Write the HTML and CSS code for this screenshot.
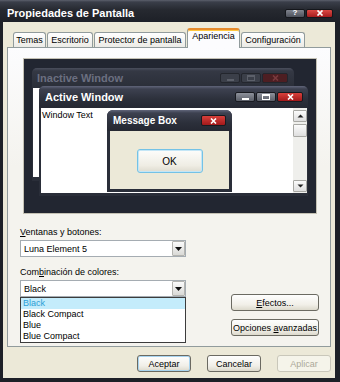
FILE: index.html
```html
<!DOCTYPE html>
<html lang="es">
<head>
  <meta charset="UTF-8" />
  <title>Propiedades de Pantalla</title>
  <link rel="stylesheet" href="styles.css">
</head>
<body>
  <div class="window">
    <div class="titlebar">
      <span class="title">Propiedades de Pantalla</span>
      <div class="caption-btns">
        <span class="cap-btn help">?</span>
        <span class="cap-btn close">
          <svg width="8" height="6" viewBox="0 0 8 6"><path d="M1.5 0.5l5 5M6.5 0.5l-5 5" stroke="#fff" stroke-width="1.7"/></svg>
        </span>
      </div>
    </div>

    <div class="client">
      <div class="tabs">
        <div class="tab t-temas">Temas</div>
        <div class="tab t-escritorio">Escritorio</div>
        <div class="tab t-protector">Protector de pantalla</div>
        <div class="tab t-apariencia active">Apariencia</div>
        <div class="tab t-config">Configuración</div>
      </div>

      <div class="panel">
        <!-- vista previa -->
        <div class="preview">
          <div class="mini inactive">
            <div class="mini-title">
              <span>Inactive Window</span>
              <div class="mini-btns">
                <span class="mbtn"><i class="g-min"></i></span>
                <span class="mbtn"><i class="g-max"></i></span>
                <span class="mbtn x">
                  <svg width="7" height="6" viewBox="0 0 7 6"><path d="M1 0.5l5 5M6 0.5l-5 5" stroke="#7a3a3e" stroke-width="1.6"/></svg>
                </span>
              </div>
            </div>
            <div class="mini-body"></div>
          </div>

          <div class="mini active-win">
            <div class="mini-title">
              <span>Active Window</span>
              <div class="mini-btns">
                <span class="mbtn"><i class="g-min"></i></span>
                <span class="mbtn"><i class="g-max"></i></span>
                <span class="mbtn x">
                  <svg width="7" height="6" viewBox="0 0 7 6"><path d="M1 0.5l5 5M6 0.5l-5 5" stroke="#fff" stroke-width="1.6"/></svg>
                </span>
              </div>
            </div>
            <div class="mini-body">
              <div class="win-text">Window Text</div>
              <div class="scrollbar">
                <span class="sb-btn">
                  <svg width="7" height="4" viewBox="0 0 7 4"><path d="M0.5 3.5h6l-3-3z" fill="#222"/></svg>
                </span>
                <span class="sb-btn thumb"></span>
                <span class="sb-btn down">
                  <svg width="7" height="4" viewBox="0 0 7 4"><path d="M0.5 0.5h6l-3 3z" fill="#222"/></svg>
                </span>
              </div>
            </div>
          </div>

          <div class="mini msgbox">
            <div class="mini-title">
              <span>Message Box</span>
              <div class="mini-btns">
                <span class="mbtn x">
                  <svg width="7" height="6" viewBox="0 0 7 6"><path d="M1 0.5l5 5M6 0.5l-5 5" stroke="#fff" stroke-width="1.6"/></svg>
                </span>
              </div>
            </div>
            <div class="mini-body">
              <span class="ok-btn">OK</span>
            </div>
          </div>
        </div>

        <!-- opciones -->
        <div class="form-area">
          <div class="left-col">
            <label class="lbl"><u>V</u>entanas y botones:</label>
            <div class="combo">
              <span>Luna Element 5</span>
              <span class="combo-arrow">
                <svg width="7" height="4" viewBox="0 0 7 4"><path d="M0 0h7l-3.5 4z" fill="#111"/></svg>
              </span>
            </div>

            <label class="lbl second">Com<u>b</u>inación de colores:</label>
            <div class="combo">
              <span>Black</span>
              <span class="combo-arrow">
                <svg width="7" height="4" viewBox="0 0 7 4"><path d="M0 0h7l-3.5 4z" fill="#111"/></svg>
              </span>
            </div>
            <ul class="list">
              <li class="sel">Black</li>
              <li>Black Compact</li>
              <li>Blue</li>
              <li>Blue Compact</li>
            </ul>
          </div>

          <div class="right-col">
            <button class="btn"><u>E</u>fectos...</button>
            <button class="btn">Opciones <u>a</u>vanzadas</button>
          </div>
        </div>
      </div>

      <div class="dialog-btns">
        <button class="btn small default">Aceptar</button>
        <button class="btn small">Cancelar</button>
        <button class="btn small disabled">Aplicar</button>
      </div>
    </div>
  </div>
</body>
</html>
```

FILE: styles.css
```css
* {
  box-sizing: border-box;
}

body {
  margin: 0;
  width: 340px;
  height: 382px;
  overflow: hidden;
  background: #1d2027;
  font-family: "Liberation Sans", Arial, sans-serif;
  font-size: 9px;
  color: #000;
}

.window {
  display: flex;
  flex-direction: column;
  height: 382px;
}

/* barra de titulo */
.titlebar {
  height: 22px;
  display: flex;
  align-items: center;
  padding: 4px 7px 0 7px;
  background: linear-gradient(#5c606c 0, #3a3e49 2px, #262930 45%, #1d2027 100%);
}

.title {
  color: #fff;
  font-weight: bold;
  font-size: 11px;
}

.caption-btns {
  margin-left: auto;
  display: flex;
  gap: 1px;
}

.cap-btn {
  height: 9px;
  border: 1px solid #15171c;
  border-radius: 2px;
  display: flex;
  align-items: center;
  justify-content: center;
  color: #fff;
  font-weight: bold;
  font-size: 8px;
  line-height: 8px;
}

.cap-btn.help {
  width: 20px;
  background: linear-gradient(#80848e, #4d515b);
}

.cap-btn.close {
  width: 27px;
  background: linear-gradient(#dc4a44, #a51c1e);
}

/* area cliente */
.client {
  flex: 1;
  margin: 0 5px 4px 3px;
  background: #ece9d8;
  display: flex;
  flex-direction: column;
}

.tabs {
  height: 25px;
  display: flex;
  align-items: flex-end;
  padding-left: 10px;
}

.tab {
  height: 15px;
  margin-right: 1px;
  border: 1px solid #919b9c;
  border-bottom: 0;
  border-radius: 3px 3px 0 0;
  background: linear-gradient(#ffffff, #ecebe6);
  text-align: center;
  line-height: 14px;
  white-space: nowrap;
}

.t-temas { width: 33px; }
.t-escritorio { width: 46px; }
.t-protector { width: 92px; }
.t-apariencia { width: 53px; }
.t-config { width: 64px; }

.tab.active {
  height: 20px;
  margin-bottom: -1px;
  position: relative;
  z-index: 1;
  background: #fcfcfe;
  border-top: 2px solid #e68b2c;
  box-shadow: inset 0 1px 0 #ffc73c;
  line-height: 13px;
}

.panel {
  height: 300px;
  margin: 0 4px;
  border: 1px solid #919b9c;
  background: linear-gradient(#fcfcfe, #f4f3ee 40%);
  padding: 10px 0 0 12px;
}

/* vista previa */
.preview {
  position: relative;
  width: 294px;
  height: 156px;
  margin-left: 3px;
  border: 1px solid #c4c1b4;
  background: #222631;
}

.mini {
  position: absolute;
  display: flex;
  flex-direction: column;
  background: #2a2e39;
  border-radius: 5px 5px 0 0;
  overflow: hidden;
}

.mini-title {
  display: flex;
  align-items: center;
  flex: none;
  font-weight: bold;
  font-size: 11px;
  color: #fff;
  background: linear-gradient(#60657a 0, #3d4150 3px, #2c303b 60%, #252832 100%);
}

.mini-btns {
  margin-left: auto;
  display: flex;
  gap: 1px;
  align-self: flex-start;
}

.mbtn {
  width: 20px;
  height: 10px;
  border: 1px solid #181a20;
  border-radius: 2px;
  background: linear-gradient(#8d919b, #5a5e68);
  display: flex;
  align-items: center;
  justify-content: center;
}

.mbtn.x {
  width: 26px;
  background: linear-gradient(#d8403b, #a2191b);
}

.g-min {
  display: block;
  width: 7px;
  height: 2px;
  margin-top: 4px;
  background: #fff;
}

.g-max {
  display: block;
  width: 8px;
  height: 6px;
  border: 1px solid #fff;
  border-top-width: 2px;
}

.inactive {
  left: 8px;
  top: 9px;
  width: 262px;
  height: 113px;
}

.inactive .mini-title {
  height: 20px;
  padding-left: 5px;
  color: #6b6f80;
  background: linear-gradient(#4a4e5c 0, #343844 3px, #2a2e38 100%);
}

.inactive .mini-btns {
  margin: 5px 6px 0 auto;
}

.inactive .mbtn {
  background: #3b3f49;
  border-color: #23262d;
}

.inactive .mbtn.x {
  background: #4d1e22;
}

.inactive .g-min,
.inactive .g-max {
  background: transparent;
  border-color: #5c606a;
}

.inactive .g-min {
  background: #5c606a;
}

.inactive .mini-body {
  flex: 1;
  margin: 0 3px 4px 1px;
  background: #fff;
}

.active-win {
  left: 15px;
  top: 27px;
  width: 269px;
  height: 110px;
}

.active-win .mini-title {
  height: 22px;
  padding-left: 6px;
}

.active-win .mini-btns {
  margin: 6px 5px 0 auto;
}

.active-win .mini-body {
  flex: 1;
  display: flex;
  margin: 0 1px 3px 2px;
  background: #fff;
}

.win-text {
  flex: 1;
  padding: 2px 0 0 1px;
  line-height: 11px;
}

.scrollbar {
  width: 14px;
  display: flex;
  flex-direction: column;
  padding: 2px 0 1px;
  background: #efefec;
}

.sb-btn {
  height: 12px;
  border: 1px solid #a8a8a4;
  border-radius: 1px;
  background: linear-gradient(#fbfbfb, #dedede);
  display: flex;
  align-items: center;
  justify-content: center;
}

.sb-btn.thumb {
  height: 13px;
  margin-top: 2px;
}

.sb-btn.down {
  margin-top: auto;
}

.msgbox {
  left: 83px;
  top: 51px;
  width: 125px;
  height: 82px;
  border-radius: 6px 6px 0 0;
}

.msgbox .mini-title {
  height: 21px;
  padding-left: 6px;
  font-size: 10px;
}

.msgbox .mini-btns {
  margin: 5px 6px 0 auto;
}

.msgbox .mbtn.x {
  width: 25px;
  height: 11px;
}

.msgbox .mini-body {
  flex: 1;
  margin: 0 3px 3px 3px;
  background: #ece9d8;
  display: flex;
  justify-content: center;
  padding-top: 18px;
}

.ok-btn {
  width: 66px;
  height: 24px;
  border: 1px solid #74c2e6;
  border-radius: 3px;
  box-shadow: inset 0 0 0 1px #c4e6f6;
  background: linear-gradient(#fdfdfb, #efede4 70%, #dedbcf);
  display: flex;
  align-items: center;
  justify-content: center;
  font-size: 10px;
}

/* formulario */
.form-area {
  display: flex;
  margin-top: 13px;
}

.left-col {
  width: 166px;
}

.lbl {
  display: block;
  height: 11px;
  line-height: 11px;
}

.lbl.second {
  margin-top: 10px;
}

.combo {
  height: 17px;
  margin-top: 2px;
  border: 1px solid #a5acb2;
  background: #fff;
  display: flex;
  align-items: center;
  padding-left: 3px;
}

.combo-arrow {
  margin-left: auto;
  width: 13px;
  height: 15px;
  border: 1px solid #b4b4b0;
  border-radius: 1px;
  background: linear-gradient(#fbfbfb, #d9d9d6);
  display: flex;
  align-items: center;
  justify-content: center;
}

.list {
  margin: 0;
  padding: 0;
  list-style: none;
  border: 1px solid #3c3c3c;
  background: #fff;
}

.list li {
  height: 11px;
  line-height: 11px;
  padding-left: 2px;
}

.list li.sel {
  background: #c4ecfb;
  color: #2c9fd6;
}

.right-col {
  margin-left: auto;
  margin-right: 11px;
  padding-top: 67px;
}

.btn {
  display: block;
  width: 88px;
  height: 17px;
  padding: 0;
  border: 1px solid #6b6a62;
  border-radius: 3px;
  background: linear-gradient(#fefefe, #f1efe8 65%, #dcd9cc);
  font-family: inherit;
  font-size: 9px;
  color: #000;
  text-align: center;
  white-space: nowrap;
}

.right-col .btn + .btn {
  margin-top: 8px;
}

.dialog-btns {
  display: flex;
  justify-content: flex-end;
  gap: 16px;
  margin-top: 8px;
  padding-right: 4px;
}

.btn.small {
  width: 54px;
}

.btn.default {
  box-shadow: inset 0 0 0 1px #a8d4f0;
}

.btn.disabled {
  border-color: #c9c7ba;
  background: #f5f4ea;
  color: #aca899;
}
```
